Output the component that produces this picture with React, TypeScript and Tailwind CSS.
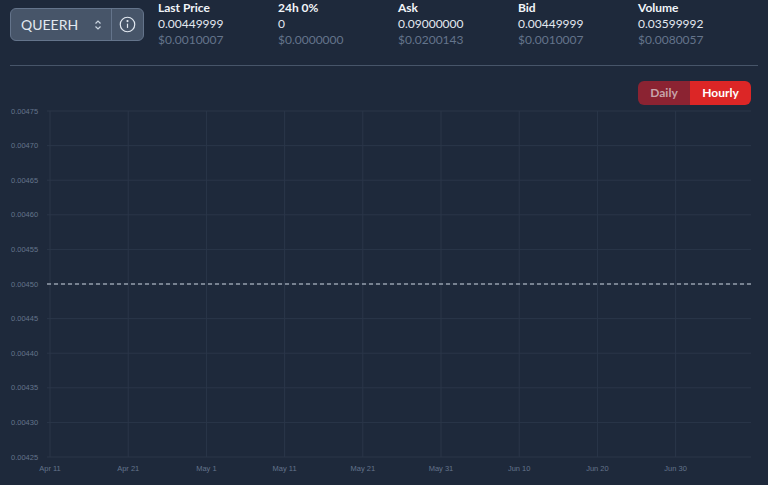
import React from "react";

const stats = [
  ["Last Price", "0.00449999", "$0.0010007"],
  ["24h 0%", "0", "$0.0000000"],
  ["Ask", "0.09000000", "$0.0200143"],
  ["Bid", "0.00449999", "$0.0010007"],
  ["Volume", "0.03599992", "$0.0080057"],
];
const yl = ["0.00475","0.00470","0.00465","0.00460","0.00455","0.00450","0.00445","0.00440","0.00435","0.00430","0.00425"];
const xl = ["Apr 11","Apr 21","May 1","May 11","May 21","May 31","Jun 10","Jun 20","Jun 30"];

export default function App() {
  const top = 119, bot = 465, step = (bot - top) / 10;
  const x0 = 50, xs = 78.2;
  return (
    <div className="w-[768px] h-[485px] bg-[#1e293b] text-white overflow-hidden" style={{ fontFamily: "Lato, 'Noto Sans', sans-serif" }}>
      <div className="flex pt-2 px-[10px] h-[42px]">
        <div className="flex w-[138px] h-[33px] rounded-md bg-[#475569] border border-[#64748b]">
          <div className="flex-1 flex items-center justify-between pl-2.5 pr-2 text-[14px] text-[#e2e8f0]">
            QUEERH
            <svg width="10" height="12" viewBox="0 0 10 12" fill="none" stroke="#cbd5e1" strokeWidth="1.2"><path d="M2.5 4.5L5 2l2.5 2.5M2.5 7.5L5 10l2.5-2.5" /></svg>
          </div>
          <div className="w-[32px] border-l border-[#64748b] flex items-center justify-center">
            <svg width="17" height="17" viewBox="0 0 20 20" fill="none" stroke="#e2e8f0" strokeWidth="1.4"><circle cx="10" cy="10" r="8.5" /><path d="M10 9v5" /><circle cx="10" cy="6" r="0.6" fill="#e2e8f0" /></svg>
          </div>
        </div>
        <div className="flex ml-[14px] -mt-2">
          {stats.map(s => (
            <div key={s[0]} className="w-[120px] text-[12px] leading-[16px]">
              <div className="font-bold text-[#f1f5f9]">{s[0]}</div>
              <div className="text-[#e2e8f0]">{s[1]}</div>
              <div className="text-[#64748b]">{s[2]}</div>
            </div>
          ))}
        </div>
      </div>
      <div className="mx-[10px] mt-[23px] border-t border-[#475569]" />
      <div className="flex justify-end pr-[17px] mt-[15px]">
        <div className="flex h-[24px] rounded-md overflow-hidden text-[12px] font-bold">
          <div className="w-[52px] bg-[#8b2332] text-[#c7a3aa] flex items-center justify-center">Daily</div>
          <div className="w-[61px] bg-[#dc2626] text-white flex items-center justify-center">Hourly</div>
        </div>
      </div>
      <svg width="768" height="370" viewBox="0 114 768 370" className="block mt-[1px]" style={{ fontFamily: "'Liberation Sans', sans-serif" }}>
        {yl.map((l, i) => (
          <g key={l}>
            <line x1="47" x2="751" y1={top + i * step} y2={top + i * step} stroke="#2a3649" strokeWidth="1" />
            <text x="11" y={top + i * step + 2.5} fontSize="7.5" fill="#64748b">{l}</text>
          </g>
        ))}
        {xl.map((l, i) => (
          <g key={l}>
            <line x1={x0 + i * xs} x2={x0 + i * xs} y1={top} y2={bot} stroke="#2a3649" strokeWidth="1" />
            <text x={x0 + i * xs} y="479" fontSize="7.5" fill="#64748b" textAnchor="middle">{l}</text>
          </g>
        ))}
        <line x1="47" x2="751" y1={292} y2={292} stroke="#cbd5e1" strokeWidth="1" strokeDasharray="4 3" />
      </svg>
    </div>
  );
}
